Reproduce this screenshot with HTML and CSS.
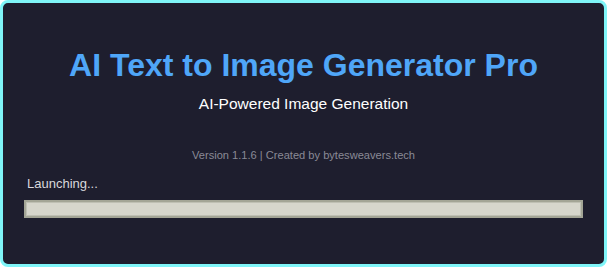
FILE: index.html
```html
<!DOCTYPE html>
<html>
<head>
<meta charset="utf-8">
<link rel="stylesheet" href="styles.css">
</head>
<body>
<div class="frame">
  <div class="panel">
    <h1 class="title">AI Text to Image Generator Pro</h1>
    <p class="subtitle">AI-Powered Image Generation</p>
    <p class="version">Version 1.1.6 | Created by bytesweavers.tech</p>
    <p class="status">Launching...</p>
    <div class="progress"><div class="progress-inner"></div></div>
  </div>
</div>
</body>
</html>
```

FILE: styles.css
```css
html, body {
  margin: 0;
  padding: 0;
  background: #ffffff;
}
body {
  width: 607px;
  height: 267px;
  font-family: "Liberation Sans", Arial, sans-serif;
}
.frame {
  box-sizing: border-box;
  width: 607px;
  height: 267px;
  border: 3px solid #7ff5f8;
  border-radius: 8px;
  background: #1e1e2e;
  overflow: hidden;
}
.panel {
  display: flex;
  flex-direction: column;
  padding: 0 21px;
}
.title {
  margin: 44px 0 0;
  text-align: center;
  font-size: 32px;
  font-weight: bold;
  line-height: 36px;
  color: #4fa6f8;
}
.subtitle {
  margin: 12px 0 0;
  text-align: center;
  font-size: 15.5px;
  line-height: 18px;
  color: #ffffff;
}
.version {
  margin: 35px 0 0;
  text-align: center;
  font-size: 11.1px;
  line-height: 14px;
  color: #8a8a96;
}
.status {
  margin: 14px 0 0;
  padding-left: 3px;
  font-size: 13px;
  line-height: 16px;
  color: #d8d8dc;
}
.progress {
  margin-top: 8px;
  box-sizing: border-box;
  height: 18px;
  border: 2px solid #a3a596;
  background: #bfc0b4;
  padding: 1px;
}
.progress-inner {
  height: 100%;
  background: #d6d6cc;
}
```
